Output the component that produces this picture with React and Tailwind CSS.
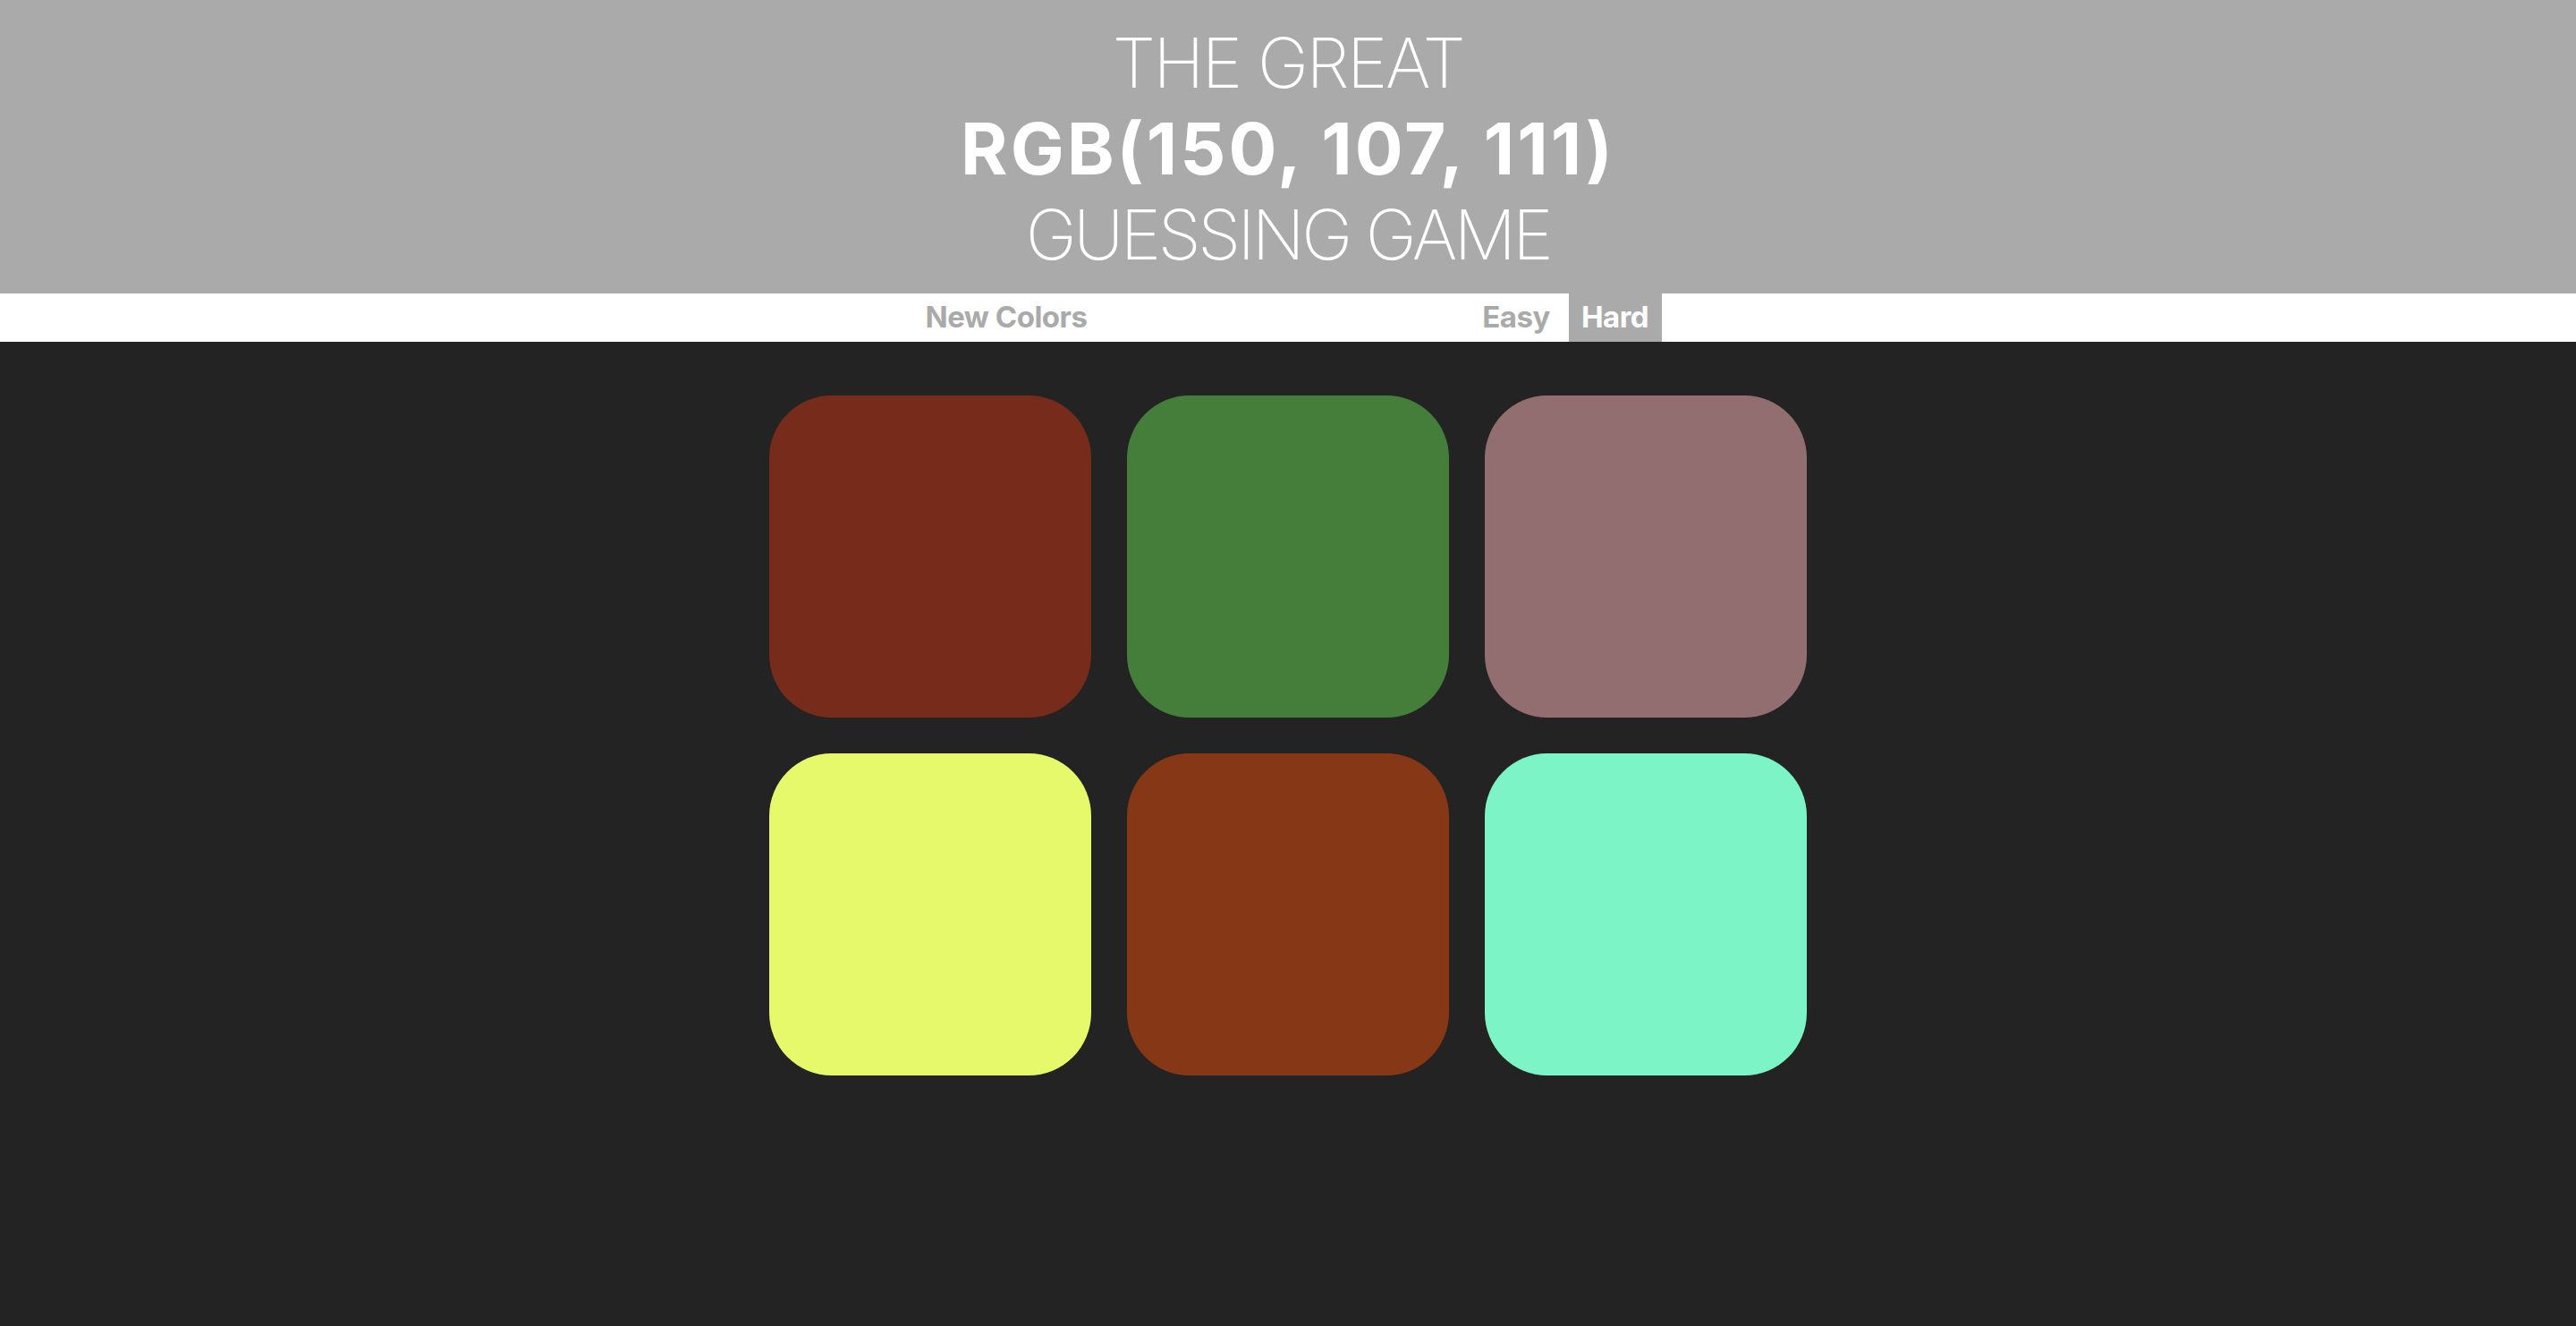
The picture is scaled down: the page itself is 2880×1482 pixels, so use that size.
import React from "react";

const colors = ["#772b1a", "#457d3a", "#936e71", "#e6f96b", "#863816", "#7cf4c6"];

export default function App() {
  return (
    <div className="min-h-screen bg-[#232323] font-['Inter','Liberation_Sans',sans-serif]">
      <header className="bg-[#aaaaaa] pt-[22px] pb-[18px] text-center text-white uppercase">
        <div className="text-[77px] leading-[96px] font-extralight tracking-[-2.5px]">The Great</div>
        <div className="text-[80px] leading-[96px] font-bold tracking-[3px]">RGB(150, 107, 111)</div>
        <div className="text-[77px] leading-[96px] font-extralight tracking-[-3.5px]">Guessing Game</div>
      </header>
      <nav className="bg-white h-[54px] flex justify-center items-stretch">
        <button className="w-[205px] text-[33px] font-bold text-[#aaaaaa] tracking-[-0.5px]">New Colors</button>
        <div className="w-[417px]"></div>
        <button className="w-[101px] text-[33px] font-bold text-[#aaaaaa] tracking-[-0.5px]">Easy</button>
        <div className="w-[8px]"></div>
        <button className="w-[104px] text-[33px] font-bold text-white bg-[#aaaaaa] tracking-[-0.5px]">Hard</button>
      </nav>
      <main className="pt-[60px] flex justify-center">
        <div className="grid grid-cols-3 gap-[40px]">
          {colors.map((c) => (
            <div key={c} className="w-[360px] h-[360px] rounded-[70px]" style={{ backgroundColor: c }} />
          ))}
        </div>
      </main>
    </div>
  );
}
